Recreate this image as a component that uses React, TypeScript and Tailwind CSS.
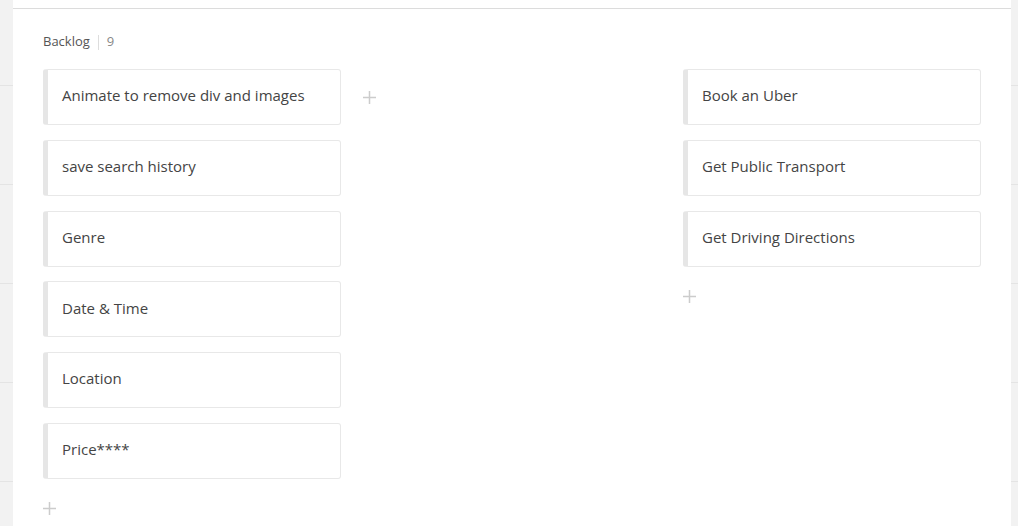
import React from 'react';

const leftCards = [
    'Animate to remove div and images',
    'save search history',
    'Genre',
    'Date & Time',
    'Location',
    'Price****',
];

const rightCards = ['Book an Uber', 'Get Public Transport', 'Get Driving Directions'];

const PlusIcon = () => (
    <svg width="13" height="13" viewBox="0 0 13 13" fill="none" stroke="#cccccc" strokeWidth="1.5">
        <path d="M6.5 0v13M0 6.5h13" />
    </svg>
);

const Card = ({ title }: { title: string }) => (
    <div className="h-[56px] flex items-center rounded-[3px] border border-[#e8e8e8] border-l-[5px] border-l-[#e6e6e6] bg-white pl-[14px] pb-[3px]">
        <span className="text-[15px] text-[#444444]">{title}</span>
    </div>
);

const Column = ({ cards }: { cards: string[] }) => (
    <div className="w-[298px] flex flex-col">
        <div className="flex flex-col gap-[14.8px]">
            {cards.map((c) => (
                <Card key={c} title={c} />
            ))}
        </div>
        <div className="pt-[23px]">
            <PlusIcon />
        </div>
    </div>
);

const SideStrip = ({ width }: { width: string }) => (
    <div className={`${width} bg-[#f2f2f2] flex flex-col`}>
        <div className="h-[86px] border-b border-[#e4e4e4]" />
        <div className="h-[99px] border-b border-[#e4e4e4]" />
        <div className="h-[99px] border-b border-[#e4e4e4]" />
        <div className="h-[99px] border-b border-[#e4e4e4]" />
        <div className="h-[99px] border-b border-[#e4e4e4]" />
    </div>
);

export default function App() {
    return (
        <div className="w-[1018px] h-[526px] overflow-hidden flex bg-[#f2f2f2]" style={{ fontFamily: '"Open Sans", sans-serif' }}>
            <SideStrip width="w-[13px]" />
            <div className="w-[998px] bg-white flex flex-col">
                <div className="h-[9px] border-b border-[#dcdcdc]" />
                <div className="px-[30px] pt-[25px]">
                    {/* Header */}
                    <div className="flex items-center h-[16px] text-[13px]">
                        <span className="text-[#555555]">Backlog</span>
                        <span className="mx-[8px] h-[15px] w-px bg-[#dddddd]" />
                        <span className="text-[#888888]">9</span>
                    </div>
                    <div className="flex justify-between mt-[19px]">
                        <div className="flex">
                            <Column cards={leftCards} />
                            <div className="ml-[22px] pt-[22px]">
                                <PlusIcon />
                            </div>
                        </div>
                        <Column cards={rightCards} />
                    </div>
                </div>
            </div>
            <SideStrip width="w-[7px]" />
        </div>
    );
}
